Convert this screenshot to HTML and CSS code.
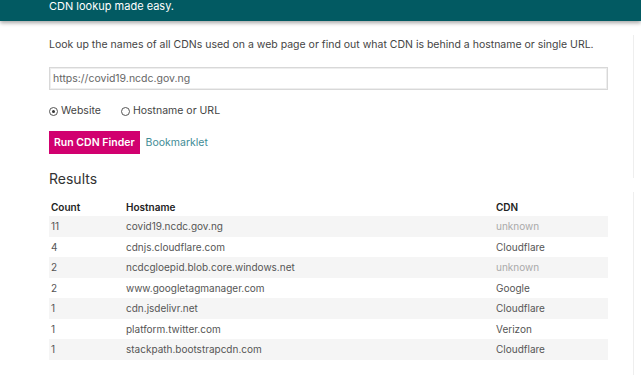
FILE: index.html
```html
<!DOCTYPE html>
<html>
<head>
<meta charset="utf-8">
<link rel="stylesheet" href="styles.css">
</head>
<body>
<header class="topbar">
  <div class="tagline">CDN lookup made easy.</div>
</header>
<div class="page">
  <main class="main">
    <p class="intro">Look up the names of all CDNs used on a web page or find out what CDN is behind a hostname or single URL.</p>
    <div class="url-field">https://covid19.ncdc.gov.ng</div>
    <div class="radios">
      <label class="radio"><span class="dot checked"></span>Website</label>
      <label class="radio"><span class="dot"></span>Hostname or URL</label>
    </div>
    <div class="actions">
      <span class="btn">Run CDN Finder</span>
      <a class="link">Bookmarklet</a>
    </div>
    <h2 class="results-title">Results</h2>
    <table class="results">
      <thead>
        <tr><th class="c-count">Count</th><th class="c-host">Hostname</th><th>CDN</th></tr>
      </thead>
      <tbody>
        <tr><td>11</td><td>covid19.ncdc.gov.ng</td><td class="muted">unknown</td></tr>
        <tr><td>4</td><td>cdnjs.cloudflare.com</td><td>Cloudflare</td></tr>
        <tr><td>2</td><td>ncdcgloepid.blob.core.windows.net</td><td class="muted">unknown</td></tr>
        <tr><td>2</td><td>www.googletagmanager.com</td><td>Google</td></tr>
        <tr><td>1</td><td>cdn.jsdelivr.net</td><td>Cloudflare</td></tr>
        <tr><td>1</td><td>platform.twitter.com</td><td>Verizon</td></tr>
        <tr><td>1</td><td>stackpath.bootstrapcdn.com</td><td>Cloudflare</td></tr>
      </tbody>
    </table>
  </main>
  <aside class="side">
    <div class="side-box side-top"></div>
    <div class="side-box side-bottom"></div>
  </aside>
</div>
</body>
</html>
```
FILE: styles.css
```css
html, body {
  margin: 0;
  padding: 0;
  background: #fff;
  font-family: Inter, "Noto Sans", sans-serif;
  color: #444;
  overflow: hidden;
}
.topbar {
  height: 21px;
  background: #025a62;
  box-shadow: 0 2px 4px rgba(0,0,0,0.35);
  position: relative;
  z-index: 1;
}
.tagline {
  padding-left: 49px;
  padding-top: 1px;
  color: #fff;
  font-size: 11px;
  line-height: 11px;
}
.page {
  display: flex;
}
.main {
  margin-left: 49px;
  width: 559px;
}
.intro {
  margin: 17px 0 0;
  font-size: 10.5px;
  line-height: 14px;
  color: #444;
}
.url-field {
  margin-top: 15px;
  height: 21px;
  border: 1px solid #d8d8d8;
  box-shadow: inset 0 0 0 1px #eee;
  font-size: 10.5px;
  line-height: 21px;
  padding-left: 3px;
  color: #666;
}
.radios {
  display: flex;
  gap: 20px;
  margin-top: 14px;
  font-size: 10.5px;
  line-height: 14px;
  color: #444;
}
.radio {
  display: flex;
  align-items: center;
  gap: 3px;
}
.dot {
  width: 7px;
  height: 7px;
  border: 1px solid #555;
  border-radius: 50%;
  position: relative;
}
.dot.checked::after {
  content: "";
  position: absolute;
  left: 2px;
  top: 2px;
  width: 3px;
  height: 3px;
  border-radius: 50%;
  background: #333;
}
.actions {
  display: flex;
  align-items: center;
  gap: 6px;
  margin-top: 13px;
}
.btn {
  background: #d1006f;
  color: #fff;
  font-size: 10.5px;
  font-weight: 600;
  height: 23px;
  line-height: 23px;
  padding: 0 5px;
  white-space: nowrap;
}
.link {
  color: #3f8c96;
  font-size: 10.5px;
}
.results-title {
  margin: 16px 0 0;
  font-size: 14px;
  font-weight: 400;
  line-height: 18px;
  color: #333;
}
.results {
  margin-top: 9px;
  width: 559px;
  border-collapse: collapse;
  font-size: 10px;
}
.results th {
  text-align: left;
  font-weight: 600;
  color: #222;
  height: 19px;
  padding: 0 2px;
}
.results td {
  height: 20.5px;
  padding: 0 2px;
  color: #555;
}
.c-count { width: 71px; }
.c-host { width: 366px; }
.results tbody tr:nth-child(odd) td {
  background: #f5f5f5;
}
.results td.muted { color: #aaa; }
.side {
  margin-left: 25px;
  width: 8px;
}
.side-box {
  border-left: 1px solid #eee;
}
.side-top {
  margin-top: 14px;
  height: 143px;
}
.side-bottom {
  margin-top: 14px;
  height: 200px;
}
```
